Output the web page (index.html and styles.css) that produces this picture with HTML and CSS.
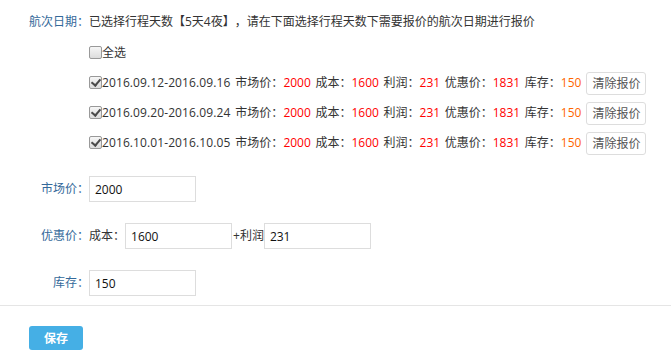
FILE: index.html
```html
<!DOCTYPE html>
<html lang="zh-CN">
<head>
<meta charset="UTF-8">
<meta name="viewport" content="width=device-width,initial-scale=1.0">
<title>航次报价</title>
<link rel="stylesheet" href="styles.css">
</head>
<body>
<div class="form">
  <!--航次日期-->
  <div class="row row-top">
    <div class="label">航次日期：</div>
    <div class="field">
      <div class="tip">已选择行程天数【5天4夜】，请在下面选择行程天数下需要报价的航次日期进行报价</div>
      <ul class="dates">
        <li><label class="check"><input type="checkbox">全选</label></li>
        <li>
          <label class="check"><input type="checkbox" checked><span class="day">2016.09.12-2016.09.16</span></label>
          <span class="info">市场价：<em>2000</em> 成本：<em>1600</em> 利润：<em>231</em> 优惠价：<em>1831</em> 库存：<em class="stock">150</em></span>
          <button class="btn-clear">清除报价</button>
        </li>
        <li>
          <label class="check"><input type="checkbox" checked><span class="day">2016.09.20-2016.09.24</span></label>
          <span class="info">市场价：<em>2000</em> 成本：<em>1600</em> 利润：<em>231</em> 优惠价：<em>1831</em> 库存：<em class="stock">150</em></span>
          <button class="btn-clear">清除报价</button>
        </li>
        <li>
          <label class="check"><input type="checkbox" checked><span class="day">2016.10.01-2016.10.05</span></label>
          <span class="info">市场价：<em>2000</em> 成本：<em>1600</em> 利润：<em>231</em> 优惠价：<em>1831</em> 库存：<em class="stock">150</em></span>
          <button class="btn-clear">清除报价</button>
        </li>
      </ul>
    </div>
  </div>
  <!--价格-->
  <div class="row row-field">
    <div class="label">市场价：</div>
    <input class="text" type="text" value="2000">
  </div>
  <div class="row row-field">
    <div class="label">优惠价：</div>
    <span class="plain">成本：</span>
    <input class="text" type="text" value="1600">
    <span class="plain">+利润</span>
    <input class="text" type="text" value="231">
  </div>
  <div class="row row-field">
    <div class="label">库存：</div>
    <input class="text" type="text" value="150">
  </div>
</div>
<div class="footer">
  <button class="btn-save">保存</button>
</div>
</body>
</html>
```

FILE: styles.css
```css
*{
    box-sizing: border-box;
    margin: 0;
    padding: 0;
}
body{
    background: #fff;
    color: #333;
    font-family: "Open Sans", "Noto Sans CJK SC", sans-serif;
    font-size: 12px;
    line-height: 20px;
    text-spacing-trim: space-all;
}
.form{
    padding: 12px 0 9px 29px;
}
.row{
    display: flex;
    align-items: center;
}
.row-top{
    align-items: flex-start;
}
.label{
    width: 60px;
    flex-shrink: 0;
    text-align: right;
    color: #34699a;
}
.dates{
    list-style: none;
    margin-top: 6px;
}
.dates li{
    display: flex;
    align-items: center;
    height: 30px;
}
.check{
    display: flex;
    align-items: center;
}
.check input{
    appearance: none;
    -webkit-appearance: none;
    width: 13px;
    height: 13px;
    margin: -2px 0 0 0;
    border: 1px solid #999;
    border-radius: 2px;
    background: linear-gradient(#f6f6f6, #dcdcdc);
    position: relative;
}
.check input:checked::after{
    content: "";
    position: absolute;
    left: 3px;
    top: 0px;
    width: 4px;
    height: 7px;
    border: solid #4a4a4a;
    border-width: 0 2px 2px 0;
    transform: rotate(40deg);
}
.day{
    letter-spacing: 0.1px;
}
.info{
    margin-left: 5px;
    white-space: nowrap;
    word-spacing: 1.5px;
}
.info em{
    font-style: normal;
    color: #f00;
}
.info em.stock{
    color: #f60;
}
.btn-clear{
    margin-left: 5px;
    height: 23px;
    padding: 0 5px;
    border: 1px solid #ddd;
    border-radius: 3px;
    background: #fff;
    color: #555;
    font-family: inherit;
    font-size: 12px;
    cursor: pointer;
}
.row-field{
    margin-top: 18px;
}
.row-field + .row-field{
    margin-top: 21px;
}
.text{
    width: 107px;
    height: 26px;
    padding: 0 5px;
    border: 1px solid #ddd;
    color: #111;
    font-family: inherit;
    font-size: 12px;
    outline: none;
}
.plain{
    color: #333;
}
.text + .plain{
    margin-left: 1px;
}
.footer{
    border-top: 1px solid #e5e5e5;
    padding: 20px 29px;
}
.btn-save{
    width: 54px;
    height: 24px;
    border: none;
    border-radius: 3px;
    background: #45afe5;
    color: #fff;
    font-family: inherit;
    font-size: 12px;
    font-weight: bold;
    cursor: pointer;
}
```
